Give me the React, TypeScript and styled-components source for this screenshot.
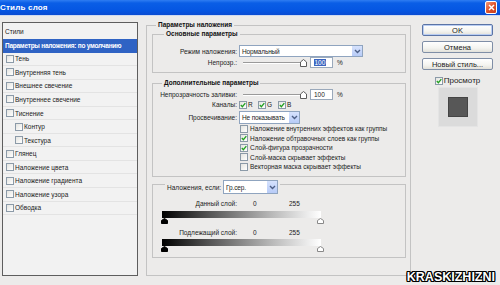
import React from "react";
import styled, { createGlobalStyle } from "styled-components";

const Global = createGlobalStyle`
  html, body { margin: 0; padding: 0; background: #ecebea; }
  body { font-family: "Liberation Sans", Arial, sans-serif; font-size: 6.5px; color: #1b1b1b; }
  * { box-sizing: border-box; }
`;

const BG = "#ecebea";

const Window = styled.div`
  position: relative;
  width: 500px;
  height: 285px;
  overflow: hidden;
  background: ${BG};
  display: flex;
  flex-direction: column;
`;

const TitleBar = styled.div`
  flex: none;
  height: 16px;
  display: flex;
  align-items: center;
  justify-content: space-between;
  padding-right: 3px;
  background: linear-gradient(#2f7df2, #0a5ee6 20%, #0556e2 70%, #0a4cd2);
  border-bottom: 1px solid #cfdaf0;
`;

const Title = styled.span`
  color: #fff;
  font-weight: bold;
  font-size: 8px;
  margin-left: 0;
  letter-spacing: 0.2px;
`;

const CloseBtn = styled.div`
  width: 12px;
  height: 13px;
  border: 1px solid #fff;
  border-radius: 2px;
  background: linear-gradient(135deg, #f39a7a, #e0542c 50%, #c53c1a);
  display: flex;
  align-items: center;
  justify-content: center;
`;

const Body = styled.div`
  display: flex;
  align-items: flex-start;
  padding: 6px 0 0 2px;
`;

const LeftPanel = styled.div`
  flex: none;
  width: 136px;
  height: 254px;
  border: 1px solid #5e5e5e;
  background: #f2f2f2;
  display: flex;
  flex-direction: column;
`;

const PanelHeader = styled.div`
  height: 16px;
  display: flex;
  align-items: center;
  padding-left: 2px;
  color: #222;
`;

const StyleRow = styled.div<{ $indent?: number; $selected?: boolean }>`
  flex: none;
  height: 13.55px;
  display: flex;
  align-items: center;
  gap: 1px;
  padding-left: ${(p) => p.$indent ?? 3}px;
  border-bottom: 1px solid ${(p) => (p.$selected ? "#2f63c4" : "#e3e3e3")};
  background: ${(p) => (p.$selected ? "#2f63c4" : "transparent")};
  color: ${(p) => (p.$selected ? "#fff" : "#222")};
  font-weight: ${(p) => (p.$selected ? "bold" : "normal")};
  letter-spacing: ${(p) => (p.$selected ? "-0.25px" : "0")};
  white-space: nowrap;
`;

const Box = styled.span<{ $size?: number }>`
  flex: none;
  width: ${(p) => p.$size ?? 8}px;
  height: ${(p) => p.$size ?? 8}px;
  border: 1px solid #8b9aa8;
  background: linear-gradient(135deg, #e4e4e0, #fff);
  display: inline-flex;
  align-items: center;
  justify-content: center;
`;

const Check: React.FC<{ checked?: boolean; size?: number }> = ({ checked, size }) => (
  <Box $size={size}>
    {checked && (
      <svg width="6" height="6" viewBox="0 0 6 6">
        <path d="M0.8 3 L2.4 4.7 L5.3 1.2" stroke="#22a022" strokeWidth="1.3" fill="none" />
      </svg>
    )}
  </Box>
);

const MainCol = styled.div`
  flex: none;
  margin: 3px 0 0 8px;
  width: 265px;
  height: 251px;
  border: 1px solid #c3c3c3;
  padding: 0 4px 0 5px;
`;

const Legend = styled.div<{ $ml: number }>`
  width: fit-content;
  height: 10px;
  line-height: 10px;
  margin: -6px 0 -4px ${(p) => p.$ml}px;
  padding: 0 2px;
  background: ${BG};
  font-weight: bold;
  color: #111;
  white-space: nowrap;
`;

const Group = styled.div<{ $h: number; $mt?: number }>`
  height: ${(p) => p.$h}px;
  margin-top: ${(p) => p.$mt ?? 0}px;
  border: 1px solid #c3c3c3;
`;

const FieldRow = styled.div<{ $h: number; $mt?: number }>`
  display: flex;
  align-items: center;
  height: ${(p) => p.$h}px;
  margin-top: ${(p) => p.$mt ?? 0}px;
  white-space: nowrap;
`;

const Label = styled.span`
  flex: none;
  width: 84px;
  text-align: right;
  margin-right: 2px;
`;

const SelectBox = styled.div<{ $w: number; $h: number }>`
  flex: none;
  width: ${(p) => p.$w}px;
  height: ${(p) => p.$h}px;
  border: 1px solid #8fa4bf;
  background: #fff;
  display: flex;
  align-items: stretch;
`;

const SelectText = styled.span`
  flex: 1;
  display: flex;
  align-items: center;
  padding-left: 2px;
  letter-spacing: -0.15px;
  white-space: nowrap;
`;

const SelectArrow = styled.span`
  flex: none;
  width: 11px;
  background: linear-gradient(#d6e2fd, #b7cbf7);
  border-left: 1px solid #fff;
  display: flex;
  align-items: center;
  justify-content: center;
`;

const Select: React.FC<{ w: number; h: number; value: string }> = ({ w, h, value }) => (
  <SelectBox $w={w} $h={h}>
    <SelectText>{value}</SelectText>
    <SelectArrow>
      <svg width="7" height="5" viewBox="0 0 7 5">
        <path d="M1 1 L3.5 3.5 L6 1" stroke="#4d5f86" strokeWidth="1.4" fill="none" />
      </svg>
    </SelectArrow>
  </SelectBox>
);

const Slider = styled.div`
  flex: none;
  width: 68px;
  display: flex;
  align-items: center;
  padding-left: 4px;
`;

const Track = styled.div`
  width: 57px;
  height: 2px;
  border-top: 1px solid #9a9a9a;
  border-bottom: 1px solid #fff;
`;

const NumInput = styled.div`
  flex: none;
  width: 23px;
  height: 11px;
  margin-left: 3px;
  border: 1px solid #9aa9bb;
  background: #fff;
  display: flex;
  align-items: center;
  padding-left: 3px;
`;

const Selected = styled.span`
  background: #3a64c0;
  color: #fff;
  padding: 0 0.5px;
`;

const Pct = styled.span`
  margin-left: 4px;
`;

const ChannelItem = styled.span<{ $w: number }>`
  flex: none;
  width: ${(p) => p.$w}px;
  display: flex;
  align-items: center;
  gap: 1px;
`;

const CheckList = styled.div`
  padding-left: 87px;
  display: flex;
  flex-direction: column;
`;

const CheckItem = styled.div`
  height: 9.5px;
  display: flex;
  align-items: center;
  gap: 2px;
  white-space: nowrap;
`;

const LegendRow = styled.div`
  width: fit-content;
  height: 14px;
  margin: -5px 0 0 12px;
  padding: 0 2px;
  background: ${BG};
  display: flex;
  align-items: center;
  white-space: nowrap;
`;

const LegendLabel = styled.span`
  width: 54px;
  margin-right: 2px;
`;

const Num = styled.span<{ $w?: number; $ml?: number }>`
  width: ${(p) => p.$w ?? 36}px;
  margin-left: ${(p) => p.$ml ?? 0}px;
`;

const GradBar = styled.div<{ $mt: number }>`
  width: 159px;
  height: 7px;
  margin: ${(p) => p.$mt}px 0 0 9px;
  background: linear-gradient(to right, #000, #555 30%, #bbb 70%, #fff);
`;

const Markers = styled.div`
  width: 163px;
  height: 5px;
  margin-left: 8px;
  display: flex;
  justify-content: space-between;
`;

const Marker: React.FC<{ dark?: boolean }> = ({ dark }) => (
  <svg width="7" height="6" viewBox="0 0 7 6">
    <path
      d="M0.5 5.5 L0.5 2.5 L3.5 0.5 L6.5 2.5 L6.5 5.5 Z"
      fill={dark ? "#000" : "#fff"}
      stroke={dark ? "#000" : "#888"}
    />
  </svg>
);

const Thumb = () => (
  <svg width="7" height="8" viewBox="0 0 7 8">
    <path d="M0.5 7.5 L0.5 3 L3.5 0.5 L6.5 3 L6.5 7.5 Z" fill="#fff" stroke="#5c5c5c" />
  </svg>
);

const SideCol = styled.div`
  flex: none;
  width: 71px;
  margin: 2px 0 0 11px;
  display: flex;
  flex-direction: column;
  align-items: center;
`;

const Button = styled.div<{ $default?: boolean; $mt?: number }>`
  width: 71px;
  height: 12px;
  margin-top: ${(p) => p.$mt ?? 0}px;
  border: 1px solid ${(p) => (p.$default ? "#5b74a5" : "#7f8ea6")};
  border-radius: 2px;
  background: linear-gradient(#ffffff, #f4f4f0 60%, #e2e1da);
  box-shadow: ${(p) => (p.$default ? "inset 0 0 0 1px #b9cdf2" : "none")};
  display: flex;
  align-items: center;
  justify-content: center;
  font-size: 7.5px;
  color: #222;
  white-space: nowrap;
`;

const PreviewToggle = styled.div`
  height: 9px;
  margin-top: 6px;
  display: flex;
  align-items: center;
  gap: 1px;
  font-size: 8px;
`;

const PreviewBox = styled.div`
  width: 40px;
  height: 40px;
  margin-top: 2px;
  background: #dbdbdb;
  border: 1px solid #e4e4e4;
  display: flex;
  align-items: center;
  justify-content: center;
`;

const PreviewSwatch = styled.div`
  width: 20px;
  height: 20px;
  background: #575757;
  border: 1px solid #444;
`;

const Watermark = styled.div`
  position: absolute;
  right: 5px;
  bottom: 1px;
  font-family: "Liberation Sans", Arial, sans-serif;
  font-weight: bold;
  font-size: 12.5px;
  color: #fff;
  text-shadow: 1px 0 0 #000, -1px 0 0 #000, 0 1px 0 #000, 0 -1px 0 #000, 1px 1px 0 #000,
    -1px -1px 0 #000, 1px -1px 0 #000, -1px 1px 0 #000;
`;

const styleItems: [string, number][] = [
  ["Тень", 3],
  ["Внутренняя тень", 3],
  ["Внешнее свечение", 3],
  ["Внутреннее свечение", 3],
  ["Тиснение", 3],
  ["Контур", 12],
  ["Текстура", 12],
  ["Глянец", 3],
  ["Наложение цвета", 3],
  ["Наложение градиента", 3],
  ["Наложение узора", 3],
  ["Обводка", 3],
];

const advChecks: [string, boolean][] = [
  ["Наложение внутренних эффектов как группы", false],
  ["Наложение обтравочных слоев как группы", true],
  ["Слой-фигура прозрачности", true],
  ["Слой-маска скрывает эффекты", false],
  ["Векторная маска скрывает эффекты", false],
];

export default function App() {
  return (
    <Window>
      <Global />
      <TitleBar>
        <Title>Стиль слоя</Title>
        <CloseBtn>
          <svg width="7" height="7" viewBox="0 0 7 7">
            <path d="M1 1 L6 6 M6 1 L1 6" stroke="#fff" strokeWidth="1.5" />
          </svg>
        </CloseBtn>
      </TitleBar>
      <Body>
        <LeftPanel>
          <PanelHeader>Стили</PanelHeader>
          <StyleRow $selected $indent={2}>
            Параметры наложения: по умолчанию
          </StyleRow>
          {styleItems.map(([name, indent]) => (
            <StyleRow key={name} $indent={indent}>
              <Check />
              {name}
            </StyleRow>
          ))}
        </LeftPanel>

        <MainCol>
          <Legend $ml={4}>Параметры наложения</Legend>
          <Group $h={39} $mt={8}>
            <Legend $ml={11}>Основные параметры</Legend>
            <FieldRow $h={12} $mt={10}>
              <Label>Режим наложения:</Label>
              <Select w={124} h={12} value="Нормальный" />
            </FieldRow>
            <FieldRow $h={11}>
              <Label>Непрозр.:</Label>
              <Slider>
                <Track />
                <Thumb />
              </Slider>
              <NumInput>
                <Selected>100</Selected>
              </NumInput>
              <Pct>%</Pct>
            </FieldRow>
          </Group>

          <Group $h={94} $mt={10}>
            <Legend $ml={9}>Дополнительные параметры</Legend>
            <FieldRow $h={11} $mt={5}>
              <Label>Непрозрачность заливки:</Label>
              <Slider>
                <Track />
                <Thumb />
              </Slider>
              <NumInput>100</NumInput>
              <Pct>%</Pct>
            </FieldRow>
            <FieldRow $h={9}>
              <Label>Каналы:</Label>
              <ChannelItem $w={19}>
                <Check checked size={8} />R
              </ChannelItem>
              <ChannelItem $w={20}>
                <Check checked size={8} />G
              </ChannelItem>
              <ChannelItem $w={20}>
                <Check checked size={8} />B
              </ChannelItem>
            </FieldRow>
            <FieldRow $h={13} $mt={2}>
              <Label>Просвечивание:</Label>
              <Select w={61} h={13} value="Не показывать" />
            </FieldRow>
            <CheckList>
              {advChecks.map(([t, c]) => (
                <CheckItem key={t}>
                  <Check checked={c} size={8} />
                  {t}
                </CheckItem>
              ))}
            </CheckList>
          </Group>

          <Group $h={74} $mt={7}>
            <LegendRow>
              <LegendLabel>Наложения, если:</LegendLabel>
              <Select w={55} h={14} value="Гр.сер." />
            </LegendRow>
            <FieldRow $h={9} $mt={5}>
              <Label>Данный слой:</Label>
              <Num $ml={14}>0</Num>
              <Num>255</Num>
            </FieldRow>
            <GradBar $mt={3} />
            <Markers>
              <Marker dark />
              <Marker />
            </Markers>
            <FieldRow $h={9} $mt={5}>
              <Label>Подлежащий слой:</Label>
              <Num $ml={14}>0</Num>
              <Num>255</Num>
            </FieldRow>
            <GradBar $mt={2} />
            <Markers>
              <Marker dark />
              <Marker />
            </Markers>
          </Group>
        </MainCol>

        <SideCol>
          <Button $default>OK</Button>
          <Button $mt={5}>Отмена</Button>
          <Button $mt={5}>Новый стиль...</Button>
          <PreviewToggle>
            <Check checked size={8} />
            Просмотр
          </PreviewToggle>
          <PreviewBox>
            <PreviewSwatch />
          </PreviewBox>
        </SideCol>
      </Body>
      <Watermark>KRASKIZHIZNI</Watermark>
    </Window>
  );
}
